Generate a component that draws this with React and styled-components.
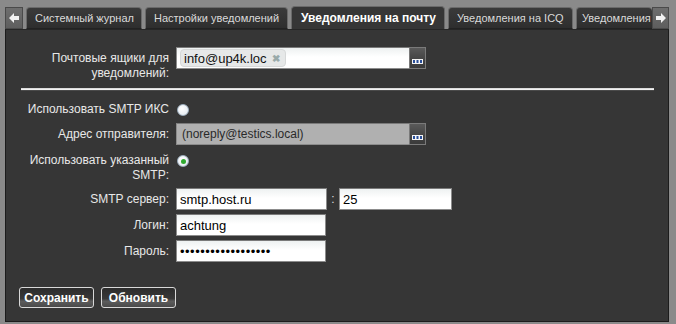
import React from 'react'
import styled, { createGlobalStyle } from 'styled-components'

const GlobalStyle = createGlobalStyle`
  body {
    margin: 0;
    background: #8a8a8a;
    font-family: "Liberation Sans", Arial, sans-serif;
    font-size: 12px;
  }
`

const Page = styled.div`
  width: 676px;
  height: 324px;
  padding: 6px 0 0 5px;
  box-sizing: border-box;
`

const TabBar = styled.div`
  display: flex;
  align-items: flex-end;
  height: 23px;
  width: 664px;
`

const Arrow = styled.div`
  flex: none;
  width: ${p => p.$w}px;
  height: 22px;
  margin: ${p => p.$m};
  background: linear-gradient(#6e6e6e, #5e5e5e);
  border: 1px solid #4a4a4a;
  box-sizing: border-box;
  display: flex;
  align-items: center;
  justify-content: center;
`

const TabStrip = styled.div`
  flex: 1;
  display: flex;
  align-items: flex-end;
  gap: 3px;
  overflow: hidden;
  height: 23px;
`

const Tab = styled.div`
  flex: ${p => (p.$w ? 'none' : '1')};
  width: ${p => (p.$w ? `${p.$w}px` : 'auto')};
  height: ${p => (p.$active ? 23 : 22)}px;
  box-sizing: border-box;
  padding-left: ${p => (p.$active ? 9 : p.$w ? 8 : 5)}px;
  display: flex;
  align-items: center;
  border: 1px solid #6a6a6a;
  border-right: ${p => (p.$w ? '1px solid #6a6a6a' : 'none')};
  border-bottom: ${p => (p.$active ? 'none' : '1px solid #222')};
  border-radius: 4px 4px 0 0;
  background: ${p => (p.$active ? '#363636' : 'linear-gradient(#3a3a3a, #2e2e2e)')};
  color: ${p => (p.$active ? '#ffffff' : '#dadada')};
  font-size: ${p => (p.$active ? 12 : 11)}px;
  font-weight: ${p => (p.$active ? 'bold' : 'normal')};
  white-space: nowrap;
  overflow: hidden;
`

const Panel = styled.div`
  width: 664px;
  height: 293px;
  box-sizing: border-box;
  background: #363636;
  border: 1px solid #1c1c1c;
  border-top-color: #262626;
  padding: 17px 0 0 0;
  color: #e8e8e8;
`

const Row = styled.div`
  display: grid;
  grid-template-columns: 163px auto;
  column-gap: 7px;
  align-items: ${p => p.$align || 'center'};
  margin-top: ${p => p.$mt || 0}px;
`

const Label = styled.div`
  text-align: right;
  line-height: 15px;
  padding-top: ${p => p.$pt || 0}px;
`

const Field = styled.div`
  display: flex;
  align-items: center;
`

const Input = styled.div`
  width: ${p => p.$w}px;
  height: 22px;
  box-sizing: border-box;
  border: 1px solid #8c8c8c;
  border-top-color: #7a7a7a;
  background: ${p => (p.$disabled ? '#b0b0b0' : 'linear-gradient(#eef1f1, #ffffff 45%)')};
  color: ${p => (p.$disabled ? '#2a2a2a' : '#000')};
  display: flex;
  align-items: center;
  padding-left: ${p => p.$pl ?? 3}px;
  font-size: ${p => p.$fs || 13}px;
  letter-spacing: ${p => p.$ls || 0}px;
  overflow: hidden;
  white-space: nowrap;
`

const Picker = styled.div`
  display: flex;
  width: 250px;
  height: 22px;
`

const PickerInput = styled(Input)`
  flex: 1;
  width: auto;
  border-right: none;
`

const DotsButton = styled.div`
  width: 17px;
  height: 22px;
  box-sizing: border-box;
  border: 1px solid #7a7a7a;
  background: linear-gradient(#5a5a5a, #4a4a4a 40%, #3a3a3a);
  display: flex;
  align-items: flex-end;
  justify-content: center;
  padding-bottom: 4px;
`

const TagItem = styled.div`
  display: flex;
  align-items: center;
  gap: 5px;
  height: 16px;
  padding: 0 5px 0 3px;
  background: #e6e8e8;
  border: 1px solid #d6d8d8;
  border-radius: 4px;
  color: #111;
`

const TagClose = styled.span`
  color: #9aa;
  font-size: 10px;
  font-weight: bold;
`

const Divider = styled.div`
  margin: 7px 0 0 15px;
  width: 633px;
  height: 1px;
  background: #f2f2f2;
  border-top: 1px solid #dcdcdc;
  border-bottom: 1px solid #4a4a4a;
`

const Radio = styled.div`
  width: 12px;
  height: 12px;
  margin-top: ${p => p.$mt || 0}px;
  margin-left: 1px;
  border-radius: 50%;
  box-sizing: border-box;
  border: 1px solid #9fb0c0;
  background: radial-gradient(circle at 40% 35%, #ffffff, #dfe6ee);
  display: flex;
  align-items: center;
  justify-content: center;

  &::after {
    content: '';
    display: ${p => (p.$checked ? 'block' : 'none')};
    width: 5px;
    height: 5px;
    border-radius: 50%;
    background: #2faa2f;
  }
`

const Colon = styled.span`
  width: 12px;
  text-align: center;
  color: #ddd;
`

const Buttons = styled.div`
  display: flex;
  gap: 7px;
  margin: 25px 0 0 13px;
`

const Button = styled.div`
  width: ${p => p.$w}px;
  height: 21px;
  box-sizing: border-box;
  border: 1px solid #d8d8d8;
  border-radius: 3px;
  background: linear-gradient(#2c2c2c, #383838 55%, #5c5c5c 70%, #4a4a4a);
  color: #fff;
  font-weight: bold;
  display: flex;
  align-items: center;
  justify-content: center;
`

const Dots = () => (
  <svg width="11" height="5" viewBox="0 0 11 5">
    <rect x="0" y="0" width="11" height="5" fill="#f4f4f4" />
    <rect x="1" y="1" width="2" height="3" fill="#2a4f9a" />
    <rect x="4.5" y="1" width="2" height="3" fill="#2a4f9a" />
    <rect x="8" y="1" width="2" height="3" fill="#2a4f9a" />
  </svg>
)

const ArrowIcon = ({ dir }) => (
  <svg width="10" height="10" viewBox="0 0 10 10">
    <path
      d={dir === 'left' ? 'M0 5 L5 0 L5 3 L10 3 L10 7 L5 7 L5 10 Z' : 'M10 5 L5 0 L5 3 L0 3 L0 7 L5 7 L5 10 Z'}
      fill="#f2f2f2"
    />
  </svg>
)

const tabs = [
  ['Системный журнал', 116],
  ['Настройки уведомлений', 143],
  ['Уведомления на почту', 154],
  ['Уведомления на ICQ', 125],
  ['Уведомления', 0],
]

export default function App() {
  return (
    <Page>
      <GlobalStyle />
      <TabBar>
        <Arrow $w={18} $m="0 3px 0 0"><ArrowIcon dir="left" /></Arrow>
        <TabStrip>
          {tabs.map(([t, w], i) => (
            <Tab key={t} $w={w} $active={i === 2}>{t}</Tab>
          ))}
        </TabStrip>
        <Arrow $w={17} $m="0"><ArrowIcon dir="right" /></Arrow>
      </TabBar>
      <Panel>
        <Row $align="start">
          <Label $pt={4}>Почтовые ящики для<br />уведомлений:</Label>
          <Picker>
            <PickerInput>
              <TagItem>info@up4k.loc <TagClose>✖</TagClose></TagItem>
            </PickerInput>
            <DotsButton><Dots /></DotsButton>
          </Picker>
        </Row>

        <Divider />

        <Row $mt={11}>
          <Label>Использовать SMTP ИКС</Label>
          <Radio />
        </Row>

        <Row $mt={6}>
          <Label>Адрес отправителя:</Label>
          <Picker>
            <PickerInput $disabled $fs={12} $pl={5}>(noreply@testics.local)</PickerInput>
            <DotsButton><Dots /></DotsButton>
          </Picker>
        </Row>

        <Row $mt={8} $align="start">
          <Label>Использовать указанный<br />SMTP:</Label>
          <Radio $checked $mt={2} />
        </Row>

        <Row $mt={5}>
          <Label>SMTP сервер:</Label>
          <Field>
            <Input $w={151}>smtp.host.ru</Input>
            <Colon>:</Colon>
            <Input $w={113}>25</Input>
          </Field>
        </Row>

        <Row $mt={4}>
          <Label>Логин:</Label>
          <Input $w={150}>achtung</Input>
        </Row>

        <Row $mt={4}>
          <Label>Пароль:</Label>
          <Input $w={150} $ls={0.5}>••••••••••••••••••</Input>
        </Row>

        <Buttons>
          <Button $w={75}>Сохранить</Button>
          <Button $w={75}>Обновить</Button>
        </Buttons>
      </Panel>
    </Page>
  )
}
